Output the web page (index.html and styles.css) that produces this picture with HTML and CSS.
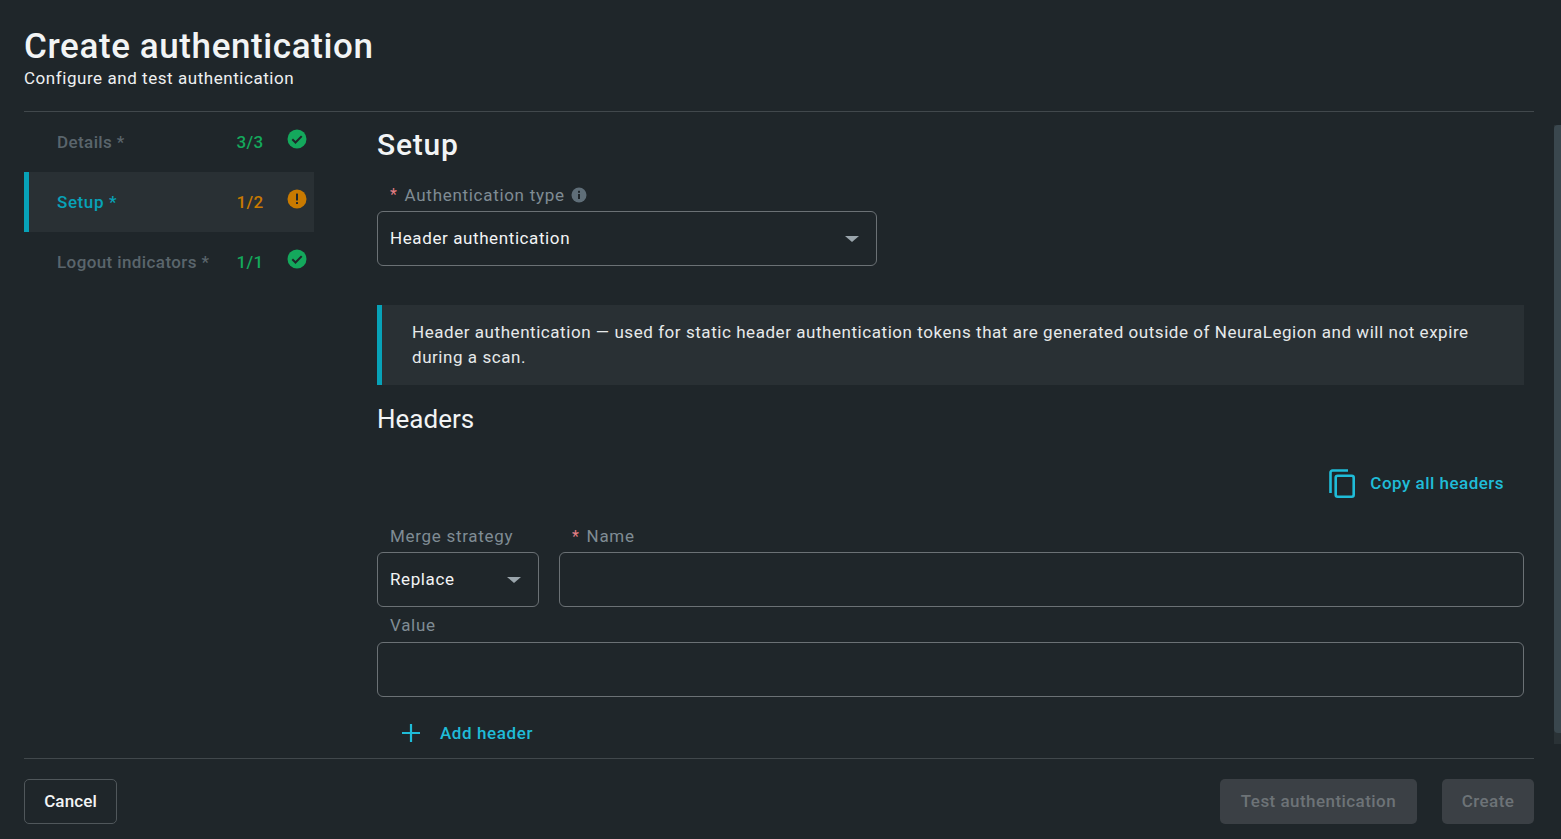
FILE: index.html
```html
<!DOCTYPE html>
<html lang="en">
<head>
<meta charset="utf-8">
<title>Create authentication</title>
<link rel="stylesheet" href="styles.css">
</head>
<body>
<div class="page">
  <header class="head">
    <h1 class="head-title">Create authentication</h1>
    <p class="head-sub">Configure and test authentication</p>
  </header>
  <div class="main">
    <nav class="steps">
      <a class="step">
        <span class="step-name">Details *</span>
        <span class="step-count ok">3/3</span>
        <svg class="step-icon" viewBox="0 0 20 20"><circle cx="10" cy="10" r="9.5" fill="#14a85c"/><path d="M5.3 10.3l3.2 3.2 6.2-6.4" fill="none" stroke="#1f262a" stroke-width="2"/></svg>
      </a>
      <a class="step step-active">
        <span class="step-name">Setup *</span>
        <span class="step-count warn">1/2</span>
        <svg class="step-icon" viewBox="0 0 20 20"><circle cx="10" cy="10" r="9.5" fill="#c97a00"/><rect x="9" y="4.6" width="2" height="7" rx="0.5" fill="#1f262a"/><rect x="9" y="13" width="2" height="2" rx="0.5" fill="#1f262a"/></svg>
      </a>
      <a class="step">
        <span class="step-name">Logout indicators *</span>
        <span class="step-count ok">1/1</span>
        <svg class="step-icon" viewBox="0 0 20 20"><circle cx="10" cy="10" r="9.5" fill="#14a85c"/><path d="M5.3 10.3l3.2 3.2 6.2-6.4" fill="none" stroke="#1f262a" stroke-width="2"/></svg>
      </a>
    </nav>
    <section class="content">
      <h2 class="setup-title">Setup</h2>
      <label class="field-label type-label"><span class="req">*</span>Authentication type
        <svg class="info" viewBox="0 0 16 16"><circle cx="8" cy="8" r="7.5" fill="#5f6e78"/><rect x="7" y="7" width="2" height="5" fill="#1f262a"/><rect x="7" y="3.8" width="2" height="2" fill="#1f262a"/></svg>
      </label>
      <div class="box box-type">
        <span class="box-value">Header authentication</span>
        <span class="caret"></span>
      </div>
      <div class="note">Header authentication — used for static header authentication tokens that are generated outside of NeuraLegion and will not expire during a scan.</div>
      <h3 class="headers-title">Headers</h3>
      <div class="copy-row">
        <a class="link copy-link">
          <svg class="copy-icon" viewBox="0 0 26 29"><path d="M19 1.5H3.5a2 2 0 0 0-2 2V24" fill="none" stroke="#1fbcd8" stroke-width="2.6"/><rect x="6.7" y="6.7" width="18" height="21" rx="2" fill="none" stroke="#1fbcd8" stroke-width="2.6"/></svg>
          Copy all headers
        </a>
      </div>
      <div class="row-top">
        <div class="col-merge">
          <label class="field-label">Merge strategy</label>
          <div class="box">
            <span class="box-value">Replace</span>
            <span class="caret"></span>
          </div>
        </div>
        <div class="col-name">
          <label class="field-label"><span class="req">*</span>Name</label>
          <div class="box"></div>
        </div>
      </div>
      <label class="field-label value-label">Value</label>
      <div class="box"></div>
      <a class="link add-link">
        <svg class="plus-icon" viewBox="0 0 18 18"><path d="M9 0v18M0 9h18" stroke="#1fbcd8" stroke-width="2.2" fill="none"/></svg>
        Add header
      </a>
    </section>
    <div class="scrollbar"><div class="thumb"></div></div>
  </div>
  <footer class="foot">
    <button class="btn btn-outline">Cancel</button>
    <div class="foot-right">
      <button class="btn btn-off btn-test">Test authentication</button>
      <button class="btn btn-off btn-create">Create</button>
    </div>
  </footer>
</div>
</body>
</html>
```
FILE: styles.css
```css
* { box-sizing: border-box; }
html, body { margin: 0; height: 100%; }
body {
  background: #1f262a;
  color: #f2f4f5;
  font-family: "Roboto", "Liberation Sans", sans-serif;
  overflow: hidden;
}
.page {
  height: 839px;
  padding-left: 24px;
  display: flex;
  flex-direction: column;
}
.head {
  height: 112px;
  margin-right: 27px;
  padding-top: 28px;
  border-bottom: 1px solid #41484c;
}
.head-title {
  margin: 0;
  font-size: 35px;
  line-height: 38px;
  font-weight: 500;
  letter-spacing: 0.6px;
}
.head-sub {
  margin: 1px 0 0;
  font-size: 17px;
  line-height: 22px;
  letter-spacing: 0.55px;
  color: #eef0f1;
}
.main {
  height: 646px;
  display: flex;
}
.steps {
  width: 290px;
  margin-right: 63px;
  flex: none;
}
.step {
  height: 60px;
  padding-left: 33px;
  display: flex;
  align-items: center;
  position: relative;
  color: #5a656c;
  font-size: 17px;
  font-weight: 500;
  letter-spacing: 0.4px;
}
.step-active {
  background: #293034;
  border-left: 5px solid #07a2b8;
  padding-left: 28px;
  color: #07a2b8;
  letter-spacing: 0.6px;
}
.step-count {
  position: absolute;
  left: 226px;
  transform: translateX(-50%);
  font-size: 17px;
  letter-spacing: 0.4px;
}
.ok { color: #14a85c; }
.warn { color: #c97a00; }
.step-icon {
  position: absolute;
  left: 263px;
  top: 17px;
  width: 20px;
  height: 20px;
}
.step-active .step-count { left: 221px; }
.step-active .step-icon { left: 258px; }
.content {
  width: 1147px;
  flex: none;
}
.setup-title {
  margin: 14px 0 0;
  font-size: 30px;
  line-height: 38px;
  font-weight: 500;
  letter-spacing: 0.8px;
}
.field-label {
  display: block;
  padding-left: 13px;
  height: 28px;
  font-size: 17px;
  line-height: 24px;
  letter-spacing: 0.7px;
  color: #7f8c94;
}
.type-label {
  margin-top: 19px;
  display: flex;
  align-items: center;
  padding-bottom: 4px;
}
.req {
  color: #e57f85;
  margin-right: 7px;
  font-size: 16px;
}
.info { width: 16px; height: 16px; margin-left: 6px; }
.box {
  height: 55px;
  border: 1px solid #6b7175;
  border-radius: 6px;
  padding: 0 12px;
  display: flex;
  align-items: center;
  justify-content: space-between;
}
.box-type { width: 500px; }
.box-value {
  font-size: 17px;
  letter-spacing: 0.6px;
  color: #f2f4f5;
  padding-bottom: 2px;
}
.caret {
  margin-right: 5px;
  width: 0;
  height: 0;
  border-left: 7px solid transparent;
  border-right: 7px solid transparent;
  border-top: 6px solid #9aa5ac;
}
.note {
  margin-top: 39px;
  height: 80px;
  background: #293034;
  border-left: 5px solid #07a2b8;
  padding: 15px 40px 0 30px;
  font-size: 17px;
  line-height: 25px;
  letter-spacing: 0.55px;
  color: #e6e9ea;
}
.headers-title {
  margin: 17px 0 0;
  font-size: 26px;
  line-height: 34px;
  font-weight: 400;
}
.copy-row {
  margin-top: 30px;
  height: 34px;
  padding-right: 20px;
  display: flex;
  justify-content: flex-end;
  align-items: center;
}
.link {
  display: flex;
  align-items: center;
  color: #1fbcd8;
  font-size: 17px;
  font-weight: 500;
  letter-spacing: 0.6px;
}
.copy-link { letter-spacing: 0.48px; }
.copy-icon { width: 26px; height: 29px; margin-right: 15px; }
.row-top {
  margin-top: 24px;
  display: flex;
  gap: 20px;
}
.col-merge { width: 162px; flex: none; }
.col-name { flex: 1; }
.value-label { margin-top: 6px; height: 29px; }
.add-link { margin: 25px 0 0 25px; height: 22px; }
.plus-icon { width: 18px; height: 18px; margin-right: 20px; }
.scrollbar {
  margin: 13px 0 14px 30px;
  width: 7px;
  flex: none;
  background: #2a3236;
}
.thumb {
  height: 608px;
  background: #3a474e;
  border-radius: 4px 0 0 4px;
}
.foot {
  height: 81px;
  margin-right: 27px;
  border-top: 1px solid #41484c;
  display: flex;
  justify-content: space-between;
  padding-top: 20px;
}
.foot-right { display: flex; gap: 25px; }
.btn {
  height: 45px;
  padding: 0 0 2px;
  border-radius: 5px;
  font-family: inherit;
  font-size: 17px;
  font-weight: 500;
  letter-spacing: 0.45px;
}
.btn-outline {
  width: 93px;
  background: transparent;
  border: 1px solid #50575b;
  color: #f2f4f5;
  letter-spacing: 0.1px;
}
.btn-off {
  background: #3b4045;
  border: 0;
  color: #6d7377;
}
.btn-test { width: 197px; }
.btn-create { width: 92px; }
```
